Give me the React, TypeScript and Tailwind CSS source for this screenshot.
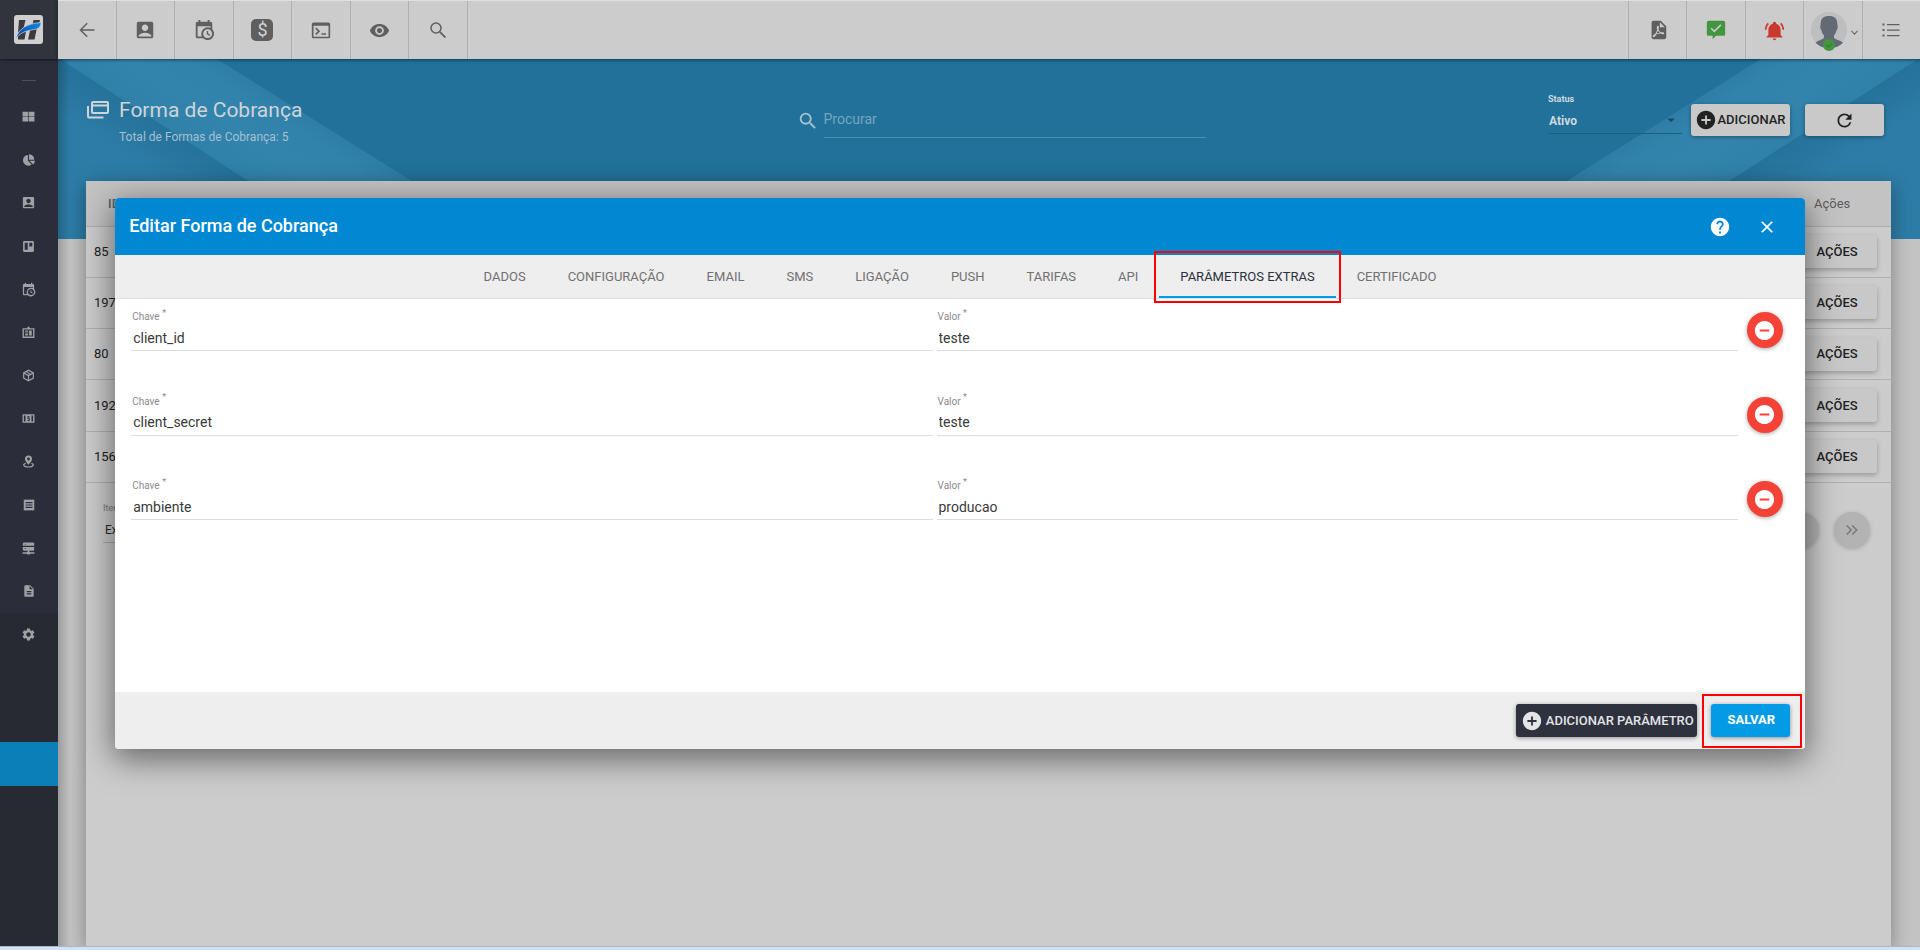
import type { ReactNode } from "react";
import {
  MdAccountBox,
  MdAddCircle,
  MdArrowDropDown,
  MdClose,
  MdDescription,
  MdHelp,
  MdReceipt,
  MdRefresh,
  MdRemoveCircle,
  MdSearch,
  MdSettings,
  MdVisibility,
} from "react-icons/md";
import { FaChartPie } from "react-icons/fa";

function Glyph({ d, className }: { d: string; className: string }) {
  return (
    <svg viewBox="0 0 24 24" fill="currentColor" fillRule="evenodd" aria-hidden="true" className={className}>
      <path d={d} />
    </svg>
  );
}

const CALENDAR_CLOCK =
  "M15,13H16.5V15.82L18.94,17.23L18.19,18.53L15,16.69V13M19,8H5V19H9.67C9.24,18.09 9,17.07 9,16A7,7 0 0,1 16,9C17.07,9 18.09,9.24 19,9.67V8M5,21C3.89,21 3,20.1 3,19V5C3,3.89 3.89,3 5,3H6V1H8V3H16V1H18V3H19A2,2 0 0,1 21,5V11.1C22.24,12.36 23,14.09 23,16A7,7 0 0,1 16,23C14.09,23 12.36,22.24 11.1,21H5M16,11.15A4.85,4.85 0 0,0 11.15,16C11.15,18.68 13.32,20.85 16,20.85A4.85,4.85 0 0,0 20.85,16C20.85,13.32 18.68,11.15 16,11.15Z";
const FILE_PDF =
  "M14,9H19.5L14,3.5V9M7,2H15L21,8V20A2,2 0 0,1 19,22H7C5.89,22 5,21.1 5,20V4A2,2 0 0,1 7,2M11.93,12.44C12.34,13.34 12.86,14.08 13.46,14.59L13.87,14.91C13,15.07 11.8,15.35 10.53,15.84L10.42,15.88L10.92,14.84C11.37,13.97 11.7,13.18 11.93,12.44M18.41,16.25C18.59,16.07 18.68,15.84 18.69,15.59C18.72,15.39 18.67,15.2 18.57,15.04C18.28,14.57 17.53,14.35 16.29,14.35L15,14.42L14.13,13.84C13.5,13.32 12.93,12.41 12.53,11.28L12.57,11.14C12.9,9.81 13.21,8.2 12.55,7.54C12.39,7.38 12.17,7.3 11.94,7.3H11.7C11.33,7.3 11,7.69 10.91,8.07C10.54,9.4 10.76,10.13 11.13,11.34C10.88,12.23 10.56,13.25 10.05,14.28L9.09,16.08L8.2,16.57C7,17.32 6.43,18.16 6.32,18.69C6.28,18.88 6.3,19.05 6.37,19.23L6.4,19.28L6.88,19.59L7.32,19.7C8.13,19.7 9.05,18.75 10.29,16.63L10.47,16.56C11.5,16.23 12.78,16 14.5,15.81C15.53,16.32 16.74,16.55 17.5,16.55C17.94,16.55 18.24,16.44 18.41,16.25Z";
const BELL_RING =
  "M21,19V20H3V19L5,17V11C5,7.9 7.03,5.17 10,4.29C10,4.19 10,4.1 10,4A2,2 0 0,1 12,2A2,2 0 0,1 14,4C14,4.1 14,4.19 14,4.29C16.97,5.17 19,7.9 19,11V17L21,19M14,21A2,2 0 0,1 12,23A2,2 0 0,1 10,21M19.75,3.19L18.33,4.61C20.04,6.3 21,8.6 21,11H23C23,8.07 21.84,5.25 19.75,3.19M1,11H3C3,8.6 3.96,6.3 5.67,4.61L4.25,3.19C2.16,5.25 1,8.07 1,11Z";
const MESSAGE_CHECK = "M3 1H21A2 2 0 0 1 23 3V17A2 2 0 0 1 21 19H12L8 23V19H3A2 2 0 0 1 1 17V3A2 2 0 0 1 3 1M10 15L18.5 6.5L17.2 5.2L10 12.4L6.8 9.2L5.5 10.5Z";
const CONSOLE = "M3 3H21A2 2 0 0 1 23 5V20A2 2 0 0 1 21 22H3A2 2 0 0 1 1 20V5A2 2 0 0 1 3 3M3 7V20H21V7ZM6.4 9L11 13.5L6.4 18L5 16.6L8.2 13.5L5 10.4ZM12.5 16H18V17.8H12.5Z";
const BOXES = "M1 3H11.4V11.5H1ZM12.6 3H23V11.5H12.6ZM1 12.5H11.4V21H1ZM12.6 12.5H23V21H12.6Z";
const TRELLO = "M4 2H20A2 2 0 0 1 22 4V20A2 2 0 0 1 20 22H4A2 2 0 0 1 2 20V4A2 2 0 0 1 4 2M5 5V18H10.5V5ZM13.5 5V12H19V5Z";
const BADGE = "M9 4L12 0.5L15 4H23V22H1V4ZM3.5 6.5V19.5H20.5V6.5ZM6 8.5H11V12H6ZM6 14H11V17.5H6ZM13 8.5H18V17.5H13ZM7.5 9.7V10.8H9.5V9.7Z";
const PACKAGE =
  "M12 1L22 6.5V17.5L12 23L2 17.5V6.5ZM12 3.6L9.5 5L16 8.6L18.6 7.2ZM7.5 6.1L5.4 7.2L12 10.8L14.1 9.7ZM4.2 9V16.3L10.9 20V12.7ZM19.8 9L13.1 12.7V20L19.8 16.3Z";
const CASH = "M1 4H23V20H1ZM3.5 6.5V17.5H6.5V6.5ZM17.5 6.5V17.5H20.5V6.5ZM10 8V13H13V14.5H10V16H11.2V17H12.8V16H14.5V11.5H11.5V10H14.5V8.3H12.8V7.3H11.2V8.3Z";
const PIN =
  "M12 1A6.5 6.5 0 0 1 18.5 7.5C18.5 12 12 18 12 18S5.500 12 5.500 7.500A6.500 6.500 0 0 1 12 1M12 4.800A2.600 2.600 0 1 0 12 10A2.600 2.600 0 1 0 12 4.800M6 14.500C3.500 15.500 2 17 2 18.500C2 21.500 6.500 23.300 12 23.300S22 21.500 22 18.500C22 17 20.500 15.500 18 14.500L16.700 16.200C18.300 16.900 19.400 17.600 19.400 18.500C19.400 19.700 16 21 12 21S4.600 19.700 4.600 18.500C4.600 17.600 5.700 16.900 7.300 16.200Z";
const SERVER = "M3 1H21L22.500 2.500V7H1.500V2.500ZM1.500 9H22.500V14.500L21 16H13.200V18H15V19H23V21.500H15L14 23H10L9 21.500H1V19H9V18H10.800V16H3L1.500 14.500ZM5 3.500V4.800H7V3.500ZM5 11.500V12.800H7V11.500Z";

function Logo() {
  return (
    <svg viewBox="0 0 29 29" className="size-[29px]" role="img" aria-label="H">
      <defs>
        <linearGradient id="swoosh" x1="0" y1="1" x2="1" y2="0">
          <stop offset="0" stopColor="#0a3fae" />
          <stop offset="1" stopColor="#0b8fe0" />
        </linearGradient>
      </defs>
      <rect width="29" height="29" rx="3" fill="#cfcfcf" />
      <path d="M5 5h6.500l-2 8.500L4 18zM19.500 5H26l-1 4-6.500 1zM4 20l5-3.500h3l-1.500 8H4zM16 15.500l7-3-2.500 12h-6.500z" fill="#3b3b3e" />
      <path d="M2 23.500C4.500 13.500 13 8.500 27 7.500c0 3.500-1.500 5.500-5 6.700C14 15.500 7 16.500 2 23.500z" fill="url(#swoosh)" stroke="#cfcfcf" strokeWidth="0.700" />
    </svg>
  );
}

const SIDE: { name: string; icon: ReactNode }[] = [
  { name: "Painel", icon: <Glyph d={BOXES} className="size-[13px]" /> },
  { name: "Gráficos", icon: <FaChartPie className="size-3" /> },
  { name: "Clientes", icon: <MdAccountBox className="size-[15px]" /> },
  { name: "Quadros", icon: <Glyph d={TRELLO} className="size-[13px]" /> },
  { name: "Agenda", icon: <Glyph d={CALENDAR_CLOCK} className="size-[15px]" /> },
  { name: "Patrimônio", icon: <Glyph d={BADGE} className="size-[13px]" /> },
  { name: "Estoque", icon: <Glyph d={PACKAGE} className="size-[13px]" /> },
  { name: "Financeiro", icon: <Glyph d={CASH} className="size-[13px]" /> },
  { name: "Mapa", icon: <Glyph d={PIN} className="size-[13px]" /> },
  { name: "Notas", icon: <MdReceipt className="size-[14px]" /> },
  { name: "Rede", icon: <Glyph d={SERVER} className="size-[13px]" /> },
  { name: "Relatórios", icon: <MdDescription className="size-[14px]" /> },
];

function Sidebar() {
  return (
    <aside className="flex w-[58px] shrink-0 flex-col bg-[#272a33] text-[#a0a1a5]">
      <div className="z-10 flex h-[59px] items-center justify-center bg-[#31343d] pr-px shadow-[0_1px_3px_rgba(0,0,0,0.5)]">
        <Logo />
      </div>
      <nav className="flex flex-col">
        <div className="flex h-[36px] justify-center bg-[#2b2d3a] pt-[21px]">
          <span className="h-px w-[14px] bg-[#4d4f59]" />
        </div>
        <div className="grid h-[518px] grid-rows-12 bg-[#2b2d3a]">
          {SIDE.map((s) => (
            <a key={s.name} href="#" aria-label={s.name} className="flex items-center justify-center pr-px">
              {s.icon}
            </a>
          ))}
        </div>
        <a href="#" aria-label="Configurações" className="flex h-[43px] items-center justify-center pr-px">
          <MdSettings className="size-[15px]" />
        </a>
        <a href="#" aria-label="Formas de Cobrança" className="mt-[86px] block h-[44px] bg-[#0b80b8]" />
      </nav>
    </aside>
  );
}

function BarButton({ label, left, children }: { label: string; left?: boolean; children: ReactNode }) {
  return (
    <button
      type="button"
      aria-label={label}
      className={`flex h-full items-center justify-center border-[#b0b0b0] ${left ? "border-l" : "border-r"}`}
    >
      {children}
    </button>
  );
}

function TopBar() {
  return (
    <header className="z-10 flex h-[59px] justify-between border-t border-[#dfe0df] bg-[#cccccc] text-[#5f5f5f] shadow-[0_1px_3px_rgba(0,0,0,0.5)]">
      <div className="grid w-[410px] grid-cols-7">
        <BarButton label="Voltar">
          <svg viewBox="0 0 16 16" className="size-4" fill="none" stroke="currentColor" strokeWidth="1.500">
            <path d="M15.500 8H1.500M8.200 1.300L1.500 8l6.700 6.700" />
          </svg>
        </BarButton>
        <BarButton label="Clientes">
          <MdAccountBox className="size-[22px]" />
        </BarButton>
        <BarButton label="Agenda">
          <Glyph d={CALENDAR_CLOCK} className="size-[22px]" />
        </BarButton>
        <BarButton label="Financeiro">
          <span className="flex size-[22px] items-center justify-center rounded-[5px] bg-[#5f5f5f] text-[18px] leading-none text-[#d2d2d2]">
            $
          </span>
        </BarButton>
        <BarButton label="Terminal">
          <Glyph d={CONSOLE} className="size-5" />
        </BarButton>
        <BarButton label="Visualizar">
          <MdVisibility className="size-[21px]" />
        </BarButton>
        <BarButton label="Pesquisar">
          <svg viewBox="0 0 16 16" className="size-4" fill="none" stroke="currentColor" strokeWidth="1.500">
            <circle cx="6" cy="6" r="5" />
            <path d="M9.800 9.800l5.700 5.700" strokeWidth="1.800" />
          </svg>
        </BarButton>
      </div>
      <div className="grid w-[292px] grid-cols-5">
        <BarButton label="Relatório PDF" left>
          <Glyph d={FILE_PDF} className="size-[22px]" />
        </BarButton>
        <BarButton label="Mensagens" left>
          <Glyph d={MESSAGE_CHECK} className="size-5 text-[#43953f]" />
        </BarButton>
        <BarButton label="Notificações" left>
          <Glyph d={BELL_RING} className="size-[21px] text-[#c83a30]" />
        </BarButton>
        <BarButton label="Perfil" left>
          <span className="flex items-center gap-1 pt-1 pl-1">
            <svg viewBox="0 0 36 40" className="h-10 w-9">
              <circle cx="18" cy="18" r="18" fill="#bdbec0" />
              <path
                d="M18 4c5.500 0 8.300 2.500 8.300 7.500 0 1.500.5 2.500.4 4s-.7 2.200-1.200 2.800c-.5 2.500-1.300 4-2.500 5.200V26c2.500 2 6.500 2.500 9 4.700A18 18 0 0 1 18 36 18 18 0 0 1 4.500 30.700C7 28.500 10.500 28 13 26v-2.500c-1.200-1.200-2-2.700-2.500-5.200-.5-.6-1.100-1.300-1.200-2.800s.4-2.500.4-4C9.700 6.500 12.500 4 18 4z"
                fill="#636a74"
              />
              <circle cx="18" cy="33" r="6" fill="#43953f" />
              <path d="M15.500 33l2 2 3.500-3.500" fill="none" stroke="#367c35" strokeWidth="1.200" />
            </svg>
            <svg viewBox="0 0 8 8" className="size-[7px]" fill="none" stroke="currentColor" strokeWidth="1.300">
              <path d="M0.500 2L4 6l3.500-4" />
            </svg>
          </span>
        </BarButton>
        <BarButton label="Menu" left>
          <svg viewBox="0 0 18 14" className="h-[14px] w-[18px]" fill="currentColor">
            <path d="M0.500 0.500h2v2h-2zM5 1h12.500v1.300H5zM0.500 6h2v2h-2zM5 6.400h12.500v1.300H5zM0.500 11.500h2v2h-2zM5 11.900h12.500v1.300H5z" />
          </svg>
        </BarButton>
      </div>
    </header>
  );
}

function Stripes({ id, className }: { id: string; className: string }) {
  return (
    <svg viewBox="0 0 470 180" className={className} aria-hidden="true">
      <defs>
        <linearGradient id={`${id}-band`} gradientUnits="userSpaceOnUse" x1="96" y1="61" x2="142" y2="-10">
          <stop offset="0" stopColor="#3081aa" />
          <stop offset="0.400" stopColor="#3384ad" />
          <stop offset="0.800" stopColor="#3283ac" />
          <stop offset="1" stopColor="#2e7ea8" />
        </linearGradient>
        <linearGradient id={`${id}-edge`} gradientUnits="userSpaceOnUse" x1="96" y1="61" x2="71" y2="100">
          <stop offset="0" stopColor="#25729b" />
          <stop offset="1" stopColor="#2d7ca7" />
        </linearGradient>
      </defs>
      <path d="M0 0h2L280 180H0z" fill={`url(#${id}-edge)`} />
      <path d="M2 0h157L446 180H280z" fill={`url(#${id}-band)`} />
    </svg>
  );
}

function PageHeader() {
  return (
    <div className="flex h-[122px] items-start px-[27px]">
      <div className="flex flex-1 pt-[37px]">
        <svg viewBox="0 0 22 18" className="mt-[5px] ml-[2px] h-[18px] w-[22px] text-[#ced4d7]" fill="currentColor" fillRule="evenodd" aria-hidden="true">
          <path d="M6 0h14a2 2 0 0 1 2 2v9a2 2 0 0 1-2 2H6a2 2 0 0 1-2-2V2a2 2 0 0 1 2-2M6 2v1.400h14V2zM6 5.400V11h14V5.400zM0 5h2v10.500h14.500v2H2a2 2 0 0 1-2-2z" />
        </svg>
        <div className="ml-[10px]">
          <h1 className="text-[21px] leading-7 text-[#ced4d7]">Forma de Cobrança</h1>
          <p className="text-[12px] leading-[26px] text-[#a5c0cf]">Total de Formas de Cobrança: 5</p>
        </div>
      </div>
      <label className="flex items-end gap-[5px] pt-[45px] pl-6 text-[#90b8cc]">
        <MdSearch className="mb-1.5 size-[22px] text-[#a6c2d0]" />
        <input
          type="text"
          placeholder="Procurar"
          aria-label="Procurar"
          className="h-[34px] w-[382px] border-b border-[#4d8fb2] bg-transparent pb-1 text-[14px] outline-none placeholder:text-[#76a6be]"
        />
      </label>
      <div className="flex flex-1 justify-end">
        <div className="flex flex-col pt-[33px]">
          <label htmlFor="status" className="text-[9px] leading-[14px] font-bold text-[#ced9df]">
            Status
          </label>
          <div className="relative flex w-[134px] items-center border-b border-[#1c5f82] pt-[1px]">
            <select id="status" className="h-[26px] w-full appearance-none bg-transparent pt-0.5 pl-px text-[12px] font-bold text-[#ced9df] outline-none">
              <option>Ativo</option>
            </select>
            <MdArrowDropDown className="pointer-events-none absolute right-0.5 size-[18px] text-[#174b66]" />
          </div>
        </div>
        <button
          type="button"
          className="mt-[45px] ml-[9px] flex h-8 w-[99px] items-center justify-center rounded-[3px] bg-[#c9c9c9] text-[13px] font-medium text-[#222] shadow-[0_1px_4px_rgba(0,0,0,0.35)]"
        >
          <MdAddCircle className="size-[22px] shrink-0" />
          ADICIONAR
        </button>
        <button
          type="button"
          aria-label="Atualizar"
          className="mt-[45px] mr-[9px] ml-[15px] flex h-8 w-[79px] items-center justify-center rounded-[3px] bg-[#c9c9c9] text-[#222] shadow-[0_1px_4px_rgba(0,0,0,0.35)]"
        >
          <MdRefresh className="size-[21px]" />
        </button>
      </div>
    </div>
  );
}

const IDS = ["85", "197", "80", "192", "156"];

function Listing() {
  return (
    <main className="mr-[29px] ml-[28px] flex flex-1 flex-col bg-[#cccccc] shadow-[0_5px_18px_rgba(0,0,0,0.35)]">
      <table className="h-[302px] w-full table-fixed border-collapse text-[13px] text-[#222]">
        <thead>
          <tr className="h-[45px] border-b border-[#adadad] bg-[#c3c3c3] text-left text-[#5c5c5c]">
            <th className="w-[55px] p-0 pl-[22px] font-medium">ID</th>
            <th className="p-0 font-medium">Descrição</th>
            <th className="w-[96px] p-0 pl-[19px] font-normal">Ações</th>
          </tr>
        </thead>
        <tbody>
          {IDS.map((id) => (
            <tr key={id} className="border-b border-[#b0b0b0]">
              <td className="pl-2">{id}</td>
              <td />
              <td className="pr-[14px]">
                <button
                  type="button"
                  className="h-[33px] w-full rounded-[3px] bg-[#c8c8c8] pl-0.5 text-center text-[13px] font-medium text-[#222] shadow-[0_2px_5px_rgba(0,0,0,0.26)]"
                >
                  AÇÕES
                </button>
              </td>
            </tr>
          ))}
        </tbody>
      </table>
      <div className="flex items-start justify-between pt-4 pr-[21px] pl-[17px]">
        <div className="flex flex-col text-[#777]">
          <label htmlFor="per-page" className="text-[9px] leading-[18px]">
            Itens por página
          </label>
          <select id="per-page" className="h-[26px] w-[120px] appearance-none border-b border-[#a9a9a9] bg-transparent pl-0.5 text-[12px] text-[#2a2a2a]">
            <option>Exibir</option>
          </select>
        </div>
        <div className="flex gap-[15px] pt-[13px]">
          <button type="button" aria-label="Próxima página" className="size-9 rounded-full bg-[#b3b3b3] shadow-[0_1px_4px_rgba(0,0,0,0.2)]" />
          <button
            type="button"
            aria-label="Última página"
            className="flex size-9 items-center justify-center rounded-full bg-[#b3b3b3] text-[#787878] shadow-[0_1px_4px_rgba(0,0,0,0.2)]"
          >
            <svg viewBox="0 0 12 10" className="h-[10px] w-3" fill="none" stroke="currentColor" strokeWidth="1.500">
              <path d="M0.700 0.500L5.200 5 0.700 9.500M6.200 0.500L10.700 5 6.200 9.500" />
            </svg>
          </button>
        </div>
      </div>
    </main>
  );
}

const TABS = ["DADOS", "CONFIGURAÇÃO", "EMAIL", "SMS", "LIGAÇÃO", "PUSH", "TARIFAS", "API", "PARÂMETROS EXTRAS", "CERTIFICADO"];

const PARAMS = [
  { key: "client_id", value: "teste" },
  { key: "client_secret", value: "teste" },
  { key: "ambiente", value: "producao" },
];

function Field({ id, label, value, className }: { id: string; label: string; value: string; className: string }) {
  return (
    <div className={`flex flex-1 flex-col ${className}`}>
      <label htmlFor={id} className="pl-px text-[10px] leading-[16px] text-[#8b8b8b]">
        {label} <sup className="text-[9px]">*</sup>
      </label>
      <input
        id={id}
        type="text"
        defaultValue={value}
        className="h-[26px] w-full border-b border-[#dcdcdc] bg-transparent pl-0.5 text-[14px] text-[#3a3a3a] outline-none"
      />
    </div>
  );
}

function EditDialog() {
  return (
    <div className="absolute inset-0 z-20 flex items-center justify-center pb-[3px]">
      <div
        role="dialog"
        aria-label="Editar Forma de Cobrança"
        className="flex w-[88%] flex-col rounded-[4px] bg-white shadow-[0_8px_32px_2px_rgba(0,0,0,0.5)]"
      >
        <div className="flex h-[57px] items-center justify-between rounded-t-[4px] bg-[#0288d3] pr-[28px] pl-[14px] text-white">
          <h2 className="pb-0.5 text-[18px] leading-none font-medium">Editar Forma de Cobrança</h2>
          <div className="flex items-center gap-[26px]">
            <button type="button" aria-label="Ajuda">
              <MdHelp className="size-[22px]" />
            </button>
            <button type="button" aria-label="Fechar">
              <MdClose className="size-5" />
            </button>
          </div>
        </div>
        <div role="tablist" className="flex h-[44px] justify-center border-b border-[#dedede] bg-[#eeeeee]">
          {TABS.map((tab) =>
            tab === "PARÂMETROS EXTRAS" ? (
              <button
                key={tab}
                type="button"
                role="tab"
                aria-selected="true"
                className="relative border-b-2 border-[#039be5] px-[21px] pt-[3px] text-[13px] text-[#2d3040]"
              >
                {tab}
                <span className="pointer-events-none absolute -inset-x-[5px] -top-1 -bottom-[7px] border-2 border-[#ff0000]" />
              </button>
            ) : (
              <button key={tab} type="button" role="tab" aria-selected="false" className="px-[21px] pt-px text-[13px] text-[#717171]">
                {tab}
              </button>
            ),
          )}
        </div>
        <div className="min-h-[393px] pt-[10px]">
          <div className="grid h-[254px] grid-rows-3">
            {PARAMS.map((p, i) => (
              <div key={p.key} className="flex items-start pr-[22px] pl-4">
                <Field id={`chave-${i}`} label="Chave" value={p.key} className="mr-1" />
                <Field id={`valor-${i}`} label="Valor" value={p.value} className="mr-[9px]" />
                <button
                  type="button"
                  aria-label="Remover parâmetro"
                  className="mt-[3px] flex size-9 shrink-0 items-center justify-center rounded-full bg-[#f44336] text-white shadow-[0_1px_4px_rgba(0,0,0,0.35)]"
                >
                  <MdRemoveCircle className="size-[23px]" />
                </button>
              </div>
            ))}
          </div>
        </div>
        <div className="flex h-[57px] items-center justify-end gap-[14px] rounded-b-[4px] bg-[#eeeeee] pr-[15px]">
          <button
            type="button"
            className="flex h-[33px] w-[181px] items-center gap-[3px] rounded-[3px] bg-[#2d323e] pl-[5px] text-[13px] font-medium whitespace-nowrap text-[#e4e4e6] shadow-[0_1px_4px_rgba(0,0,0,0.4)]"
          >
            <MdAddCircle className="size-[22px] shrink-0" />
            ADICIONAR PARÂMETRO
          </button>
          <button
            type="button"
            className="relative h-[33px] w-[79px] rounded-[3px] bg-[#039be5] pb-px pl-0.5 text-[13px] font-bold text-white shadow-[0_1px_4px_rgba(0,0,0,0.4)]"
          >
            SALVAR
            <span className="pointer-events-none absolute -top-2.5 -right-3 -bottom-[11px] -left-[9px] border-2 border-[#ff0000]" />
          </button>
        </div>
      </div>
    </div>
  );
}

export default function App() {
  return (
    <div className="relative flex min-h-screen flex-col overflow-hidden bg-[#c3c3c3] font-[Roboto,sans-serif]">
      <div className="flex flex-1">
        <Sidebar />
        <div className="z-10 flex min-w-0 flex-1 flex-col">
          <TopBar />
          <div className="relative flex flex-1 flex-col">
            <div className="absolute inset-x-0 top-0 flex h-[180px] justify-between bg-[#21719a]">
              <Stripes id="left" className="h-[180px] w-[470px]" />
              <Stripes id="right" className="h-[180px] w-[470px] -scale-x-100" />
            </div>
            <div className="absolute inset-y-0 left-0 w-3 bg-linear-to-r from-black/20 to-transparent" />
            <div className="relative flex flex-1 flex-col">
              <PageHeader />
              <Listing />
            </div>
          </div>
        </div>
      </div>
      <div className="z-10 h-1 border-t border-[#a9b7c4] bg-[#d0e3f4]" />
      <EditDialog />
    </div>
  );
}
